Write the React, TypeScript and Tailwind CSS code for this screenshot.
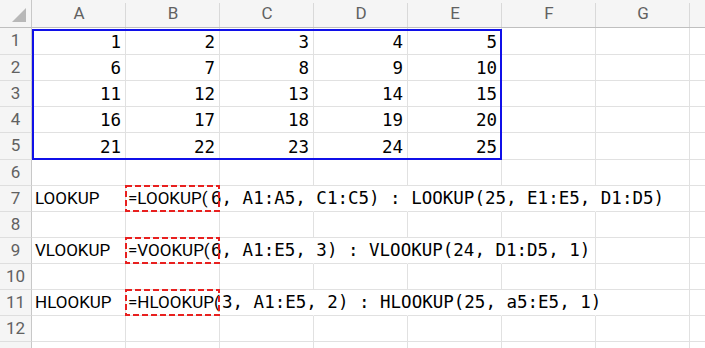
const cols = ["A", "B", "C", "D", "E", "F", "G"]

interface RowData {
    n: number
    h: string
    nums?: number[]
    label?: string
    lead?: string
    leadW?: string
    rest?: string
    hideTo?: number
}

const rows: RowData[] = [
    { n: 1, h: "h-[27px]", nums: [1, 2, 3, 4, 5] },
    { n: 2, h: "h-[26px]", nums: [6, 7, 8, 9, 10] },
    { n: 3, h: "h-[26px]", nums: [11, 12, 13, 14, 15] },
    { n: 4, h: "h-[26px]", nums: [16, 17, 18, 19, 20] },
    { n: 5, h: "h-[27px]", nums: [21, 22, 23, 24, 25] },
    { n: 6, h: "h-[26px]" },
    { n: 7, h: "h-[26px]", label: "LOOKUP", lead: "=LOOKUP(", leadW: "w-[83px]", rest: "6, A1:A5, C1:C5) : LOOKUP(25, E1:E5, D1:D5)", hideTo: 6 },
    { n: 8, h: "h-[26px]" },
    { n: 9, h: "h-[26px]", label: "VLOOKUP", lead: "=VOOKUP(", leadW: "w-[83px]", rest: "6, A1:E5, 3) : VLOOKUP(24, D1:D5, 1)", hideTo: 5 },
    { n: 10, h: "h-[26px]" },
    { n: 11, h: "h-[26px]", label: "HLOOKUP", lead: "=HLOOKUP(", leadW: "w-[94px]", rest: "3, A1:E5, 2) : HLOOKUP(25, a5:E5, 1)", hideTo: 6 },
    { n: 12, h: "h-[26px]" },
    { n: 13, h: "h-[26px]" },
]

const DashedBox = () => (
    <svg className="absolute left-[-1px] top-[-1px] w-[95px] h-[27px] pointer-events-none" viewBox="0 0 95 27">
        <rect x="1" y="1" width="93" height="25" fill="none" stroke="#e8201f" strokeWidth="2" strokeDasharray="6 3" />
    </svg>
)

const Row = ({ row }: { row: RowData }) => {

    return (

        <div className={`flex ${row.h}`}>

            <div className="w-[32px] shrink-0 bg-[#f5f5f5] border-r border-r-[#c8c8c8] border-b border-b-[#dedede] flex items-center justify-center text-[17px] text-[#616161]">
                {row.n < 13 ? row.n : ""}
            </div>

            {
                cols.map((c, i) => {

                    const hidden = row.hideTo !== undefined && i >= 1 && i < row.hideTo

                    return (

                        <div
                            key={c}
                            className={`relative w-[94px] shrink-0 border-b border-b-[#e1e1e1] border-r ${hidden ? "border-r-transparent" : "border-r-[#e1e1e1]"}`}
                        >

                            {
                                row.nums && i < 5 && (
                                    <div className="h-full flex items-center justify-end pr-[4px] pt-[2px] font-['DejaVu_Sans_Mono',monospace] text-[17.5px] text-black">
                                        {row.nums[i]}
                                    </div>
                                )
                            }

                            {
                                row.label && i === 0 && (
                                    <div className="h-full flex items-center pl-[3px] text-[17px] text-black">
                                        {row.label}
                                    </div>
                                )
                            }

                            {
                                row.lead && i === 1 && (
                                    <>
                                        <div className="absolute left-[2px] top-0 h-full flex items-center whitespace-nowrap text-black z-0">
                                            <span className={`inline-block ${row.leadW} text-[17px]`}>{row.lead}</span>
                                            <span className="font-['DejaVu_Sans_Mono',monospace] text-[17.5px] whitespace-pre">{row.rest}</span>
                                        </div>
                                        <DashedBox />
                                    </>
                                )
                            }

                        </div>

                    )

                })
            }

            <div className="flex-1 border-b border-b-[#e1e1e1]" />

        </div>

    )

}

const App = () => {

    return (

        <div className="w-[705px] h-[348px] overflow-hidden bg-white font-['Roboto',sans-serif]">

            <div className="flex h-[28px] bg-[#f5f5f5] border-b border-b-[#bfbfbf]">

                <div className="relative w-[32px] shrink-0 border-r border-r-[#c8c8c8]">
                    <svg className="absolute left-0 top-0" width="31" height="27" viewBox="0 0 31 27">
                        <polygon points="12,22 26,22 26,8" fill="#b8b8b8" />
                    </svg>
                </div>

                {
                    cols.map((c) => (
                        <div key={c} className="relative w-[94px] shrink-0 flex items-center justify-center text-[17px] text-[#616161] after:absolute after:right-0 after:top-[3px] after:bottom-0 after:w-px after:bg-[#d9d9d9]">
                            {c}
                        </div>
                    ))
                }

                <div className="flex-1" />

            </div>

            <div className="relative">

                {
                    rows.map((r) => <Row key={r.n} row={r} />)
                }

                <div className="absolute left-[32px] top-[1px] w-[470px] h-[131px] border-2 border-[#1010e8] pointer-events-none" />

            </div>

        </div>

    )

}

export default App
